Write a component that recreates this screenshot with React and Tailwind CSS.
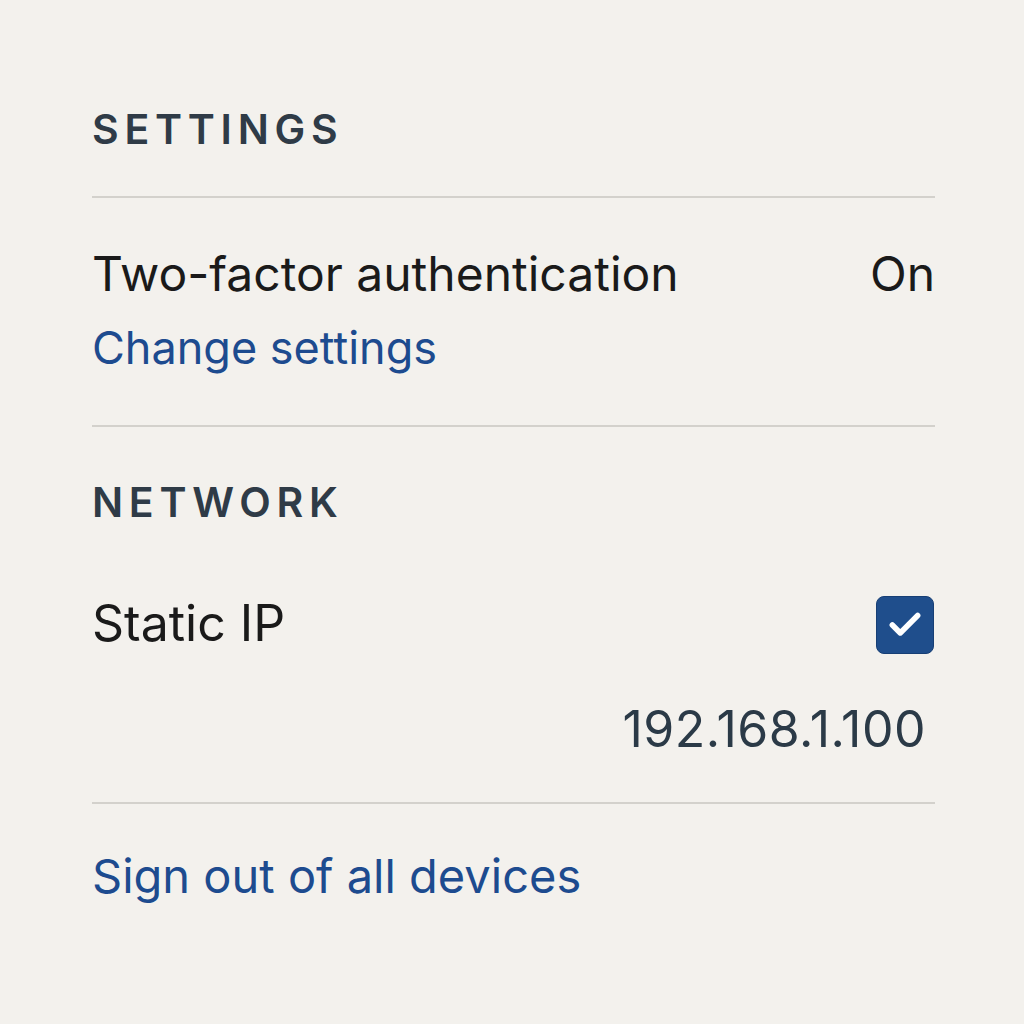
import { Check } from 'lucide-react';

export default function App() {
  return (
    <div
      className="min-h-[1024px] w-[1024px] bg-[#f3f1ed] pl-[92px] pr-[89px] pt-[104px]"
      style={{ fontFamily: 'Inter, "Noto Sans", sans-serif' }}
    >
      {/* Settings */}
      <h2 className="text-[41px] font-semibold leading-[50px] tracking-[0.14em] text-[#2f3b47]">
        SETTINGS
      </h2>
      <div className="mt-[42px] h-[2px] bg-[#d3d1cc]" />

      <div className="pt-[46px] pb-[47px]">
        <div className="flex items-center justify-between">
          <span className="text-[48px] leading-[60px] text-[#1a1a1a]">Two-factor authentication</span>
          <span className="text-[48px] leading-[60px] text-[#1a1a1a]">On</span>
        </div>
        <a className="mt-[14px] block text-[45px] leading-[60px] text-[#1d4b8f]">Change settings</a>
      </div>
      <div className="h-[2px] bg-[#d3d1cc]" />

      {/* Network */}
      <h2 className="mt-[50px] text-[41px] font-semibold leading-[50px] tracking-[0.14em] text-[#2f3b47]">
        NETWORK
      </h2>

      <div className="mt-[65px] flex items-center justify-between">
        <span className="text-[50px] leading-[60px] text-[#1a1a1a]">Static IP</span>
        <div className="mr-px mt-[4px] flex h-[58px] w-[58px] items-center justify-center rounded-[8px] border border-[#173f75] bg-[#1f4e8c]">
          <Check className="h-[38px] w-[38px] text-white" strokeWidth={3.5} />
        </div>
      </div>
      <div className="mt-[45px] flex justify-end pr-[9px]">
        <span className="text-[50px] leading-[60px] tracking-[0.01em] text-[#2b3a47]">192.168.1.100</span>
      </div>
      <div className="mt-[43px] h-[2px] bg-[#d3d1cc]" />

      <a className="mt-[42px] block text-[47px] leading-[60px] text-[#1d4b8f]">Sign out of all devices</a>
    </div>
  );
}
